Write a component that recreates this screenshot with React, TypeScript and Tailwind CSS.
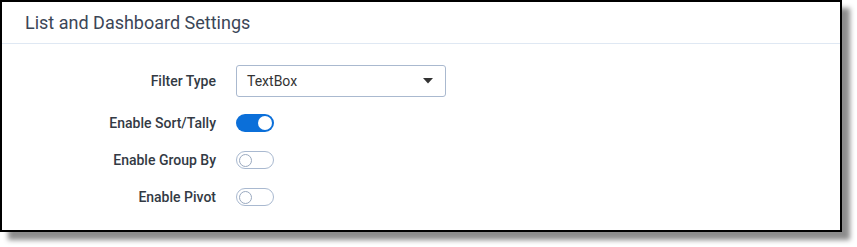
import { useState } from "react";

function Toggle({ on }: { on: boolean }) {
    return on ? (
        <div className="w-[38px] h-[18px] rounded-full bg-[#0b6fd9] flex items-center justify-end pr-[2px]">
            <div className="w-[14px] h-[14px] rounded-full bg-white" />
        </div>
    ) : (
        <div className="w-[38px] h-[18px] rounded-full bg-white border border-[#a9b9d0] flex items-center pl-[2px]">
            <div className="w-[13px] h-[13px] rounded-full bg-white border border-[#9aa9bf]" />
        </div>
    );
}

function Row({ label, children, className }: { label: string; children: React.ReactNode; className?: string }) {
    return (
        <div className={"flex items-center " + (className ?? "")}>
            <div className="w-[234px] pr-[20px] text-right text-[14px] leading-[18px] font-medium text-[#333a44]">
                {label}
            </div>
            {children}
        </div>
    );
}

export default function App() {
    const [filter] = useState("TextBox");

    return (
        <div className="w-[857px] h-[247px] bg-white" style={{ fontFamily: "Roboto, 'Liberation Sans', sans-serif" }}>
            <div className="w-[842px] h-[232px] border-2 border-black bg-white shadow-[8px_8px_5px_rgba(0,0,0,0.45)]">
                {/* header */}
                <div className="h-[42px] border-b border-[#dfe8f3] flex items-center pl-[23px]">
                    <span className="text-[18px] text-[#3b4657]">List and Dashboard Settings</span>
                </div>

                <div className="pt-[21px]">
                    <Row label="Filter Type">
                        <div className="w-[210px] h-[32px] border border-[#aab9cf] rounded-[3px] flex items-center justify-between pl-[10px] pr-[12px]">
                            <span className="text-[14px] text-[#333]">{filter}</span>
                            <svg width="10" height="6" viewBox="0 0 10 6">
                                <path d="M0 0 L10 0 L5 5.5 Z" fill="#333" />
                            </svg>
                        </div>
                    </Row>
                    <Row label="Enable Sort/Tally" className="mt-[17px]">
                        <Toggle on />
                    </Row>
                    <Row label="Enable Group By" className="mt-[19px]">
                        <Toggle on={false} />
                    </Row>
                    <Row label="Enable Pivot" className="mt-[19px]">
                        <Toggle on={false} />
                    </Row>
                </div>
            </div>
        </div>
    );
}
